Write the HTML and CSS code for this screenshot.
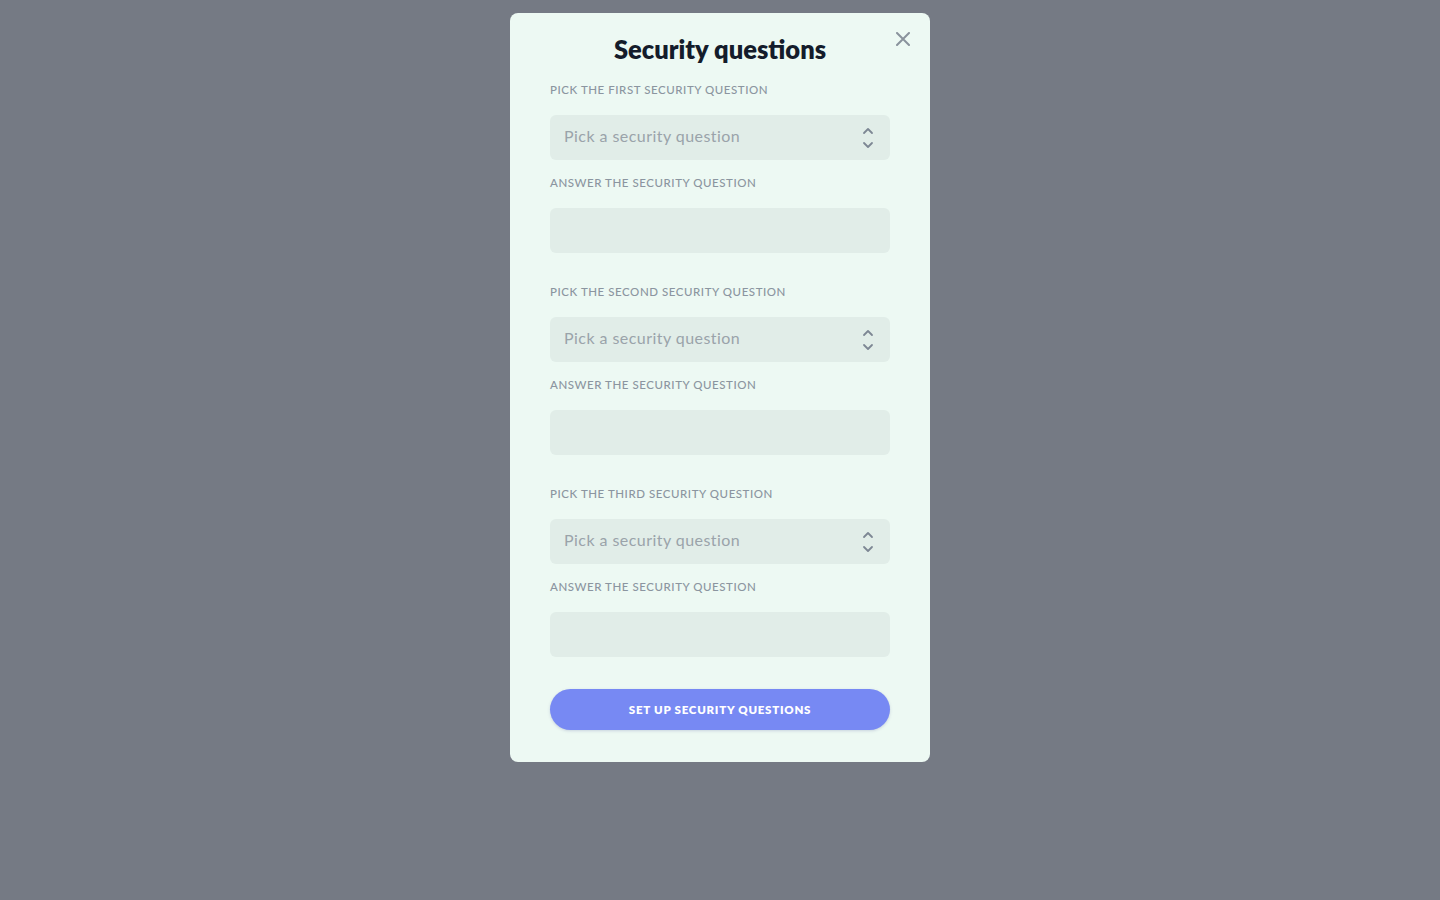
FILE: index.html
```html
<!DOCTYPE html>
<html lang="en">
<head>
<meta charset="utf-8">
<title>Security questions</title>
<link rel="stylesheet" href="styles.css">
</head>
<body>
<div class="overlay">
  <div class="modal">
    <button class="close" aria-label="Close">
      <svg width="14" height="14" viewBox="0 0 14 14"><path d="M1 1L13 13M13 1L1 13" stroke="#8a939c" stroke-width="2" stroke-linecap="round"/></svg>
    </button>
    <h1 class="title">Security questions</h1>
    <form class="form">
      <div class="section">
        <label class="label">Pick the first security question</label>
        <div class="select"><span class="placeholder">Pick a security question</span>
          <svg width="12" height="22" viewBox="0 0 12 22"><path d="M2 6L6 2L10 6M2 16L6 20L10 16" fill="none" stroke="#7d8794" stroke-width="1.8" stroke-linecap="round" stroke-linejoin="round"/></svg>
        </div>
        <label class="label">Answer the security question</label>
        <div class="input"></div>
      </div>
      <div class="section">
        <label class="label">Pick the second security question</label>
        <div class="select"><span class="placeholder">Pick a security question</span>
          <svg width="12" height="22" viewBox="0 0 12 22"><path d="M2 6L6 2L10 6M2 16L6 20L10 16" fill="none" stroke="#7d8794" stroke-width="1.8" stroke-linecap="round" stroke-linejoin="round"/></svg>
        </div>
        <label class="label">Answer the security question</label>
        <div class="input"></div>
      </div>
      <div class="section">
        <label class="label">Pick the third security question</label>
        <div class="select"><span class="placeholder">Pick a security question</span>
          <svg width="12" height="22" viewBox="0 0 12 22"><path d="M2 6L6 2L10 6M2 16L6 20L10 16" fill="none" stroke="#7d8794" stroke-width="1.8" stroke-linecap="round" stroke-linejoin="round"/></svg>
        </div>
        <label class="label">Answer the security question</label>
        <div class="input"></div>
      </div>
      <button type="button" class="submit">Set up security questions</button>
    </form>
  </div>
</div>
</body>
</html>
```

FILE: styles.css
```css
* { box-sizing: border-box; }
html, body { margin: 0; padding: 0; }
body {
  background: #757a84;
  font-family: "Lato", "Inter", "Noto Sans", sans-serif;
  min-height: 900px;
}
.overlay {
  display: flex;
  justify-content: center;
  padding-top: 13px;
}
.modal {
  position: relative;
  width: 420px;
  background: #edf9f3;
  border-radius: 8px;
  padding: 20px 40px 32px;
}
.close {
  position: absolute;
  top: 19px;
  right: 20px;
  background: none;
  border: 0;
  padding: 0;
  width: 14px;
  height: 14px;
  cursor: pointer;
}
.close svg { display: block; }
.title {
  margin: 0;
  text-align: center;
  font-size: 25.5px;
  line-height: 32px;
  font-weight: 800;
  color: #141c2b;
  letter-spacing: 0;
}
.form {
  display: flex;
  flex-direction: column;
  margin-top: 16px;
}
.section {
  display: flex;
  flex-direction: column;
  margin-bottom: 30px;
}
.section:last-of-type { margin-bottom: 32px; }
.label {
  display: block;
  font-size: 11.5px;
  line-height: 16px;
  padding-top: 1px;
  height: 16px;
  text-transform: uppercase;
  letter-spacing: 0.55px;
  color: #8b95a0;
  font-weight: 500;
  margin-bottom: 18px;
}
.select, .input {
  height: 45px;
  border-radius: 6px;
  background: #e1ede8;
}
.select {
  display: flex;
  align-items: center;
  justify-content: space-between;
  padding: 0 16px 0 14px;
  font-size: 16px;
  color: #9aa3aa;
  letter-spacing: 0.45px;
  margin-bottom: 14px;
}
.placeholder {
  position: relative;
  top: -2px;
}
.select svg { display: block; }
.submit {
  height: 41px;
  border: 0;
  border-radius: 21px;
  background: #7789f3;
  color: #ffffff;
  font-family: inherit;
  font-size: 11.5px;
  font-weight: 800;
  letter-spacing: 0.75px;
  text-transform: uppercase;
  box-shadow: 0 1px 3px rgba(90, 100, 160, 0.25);
  cursor: pointer;
}
```
